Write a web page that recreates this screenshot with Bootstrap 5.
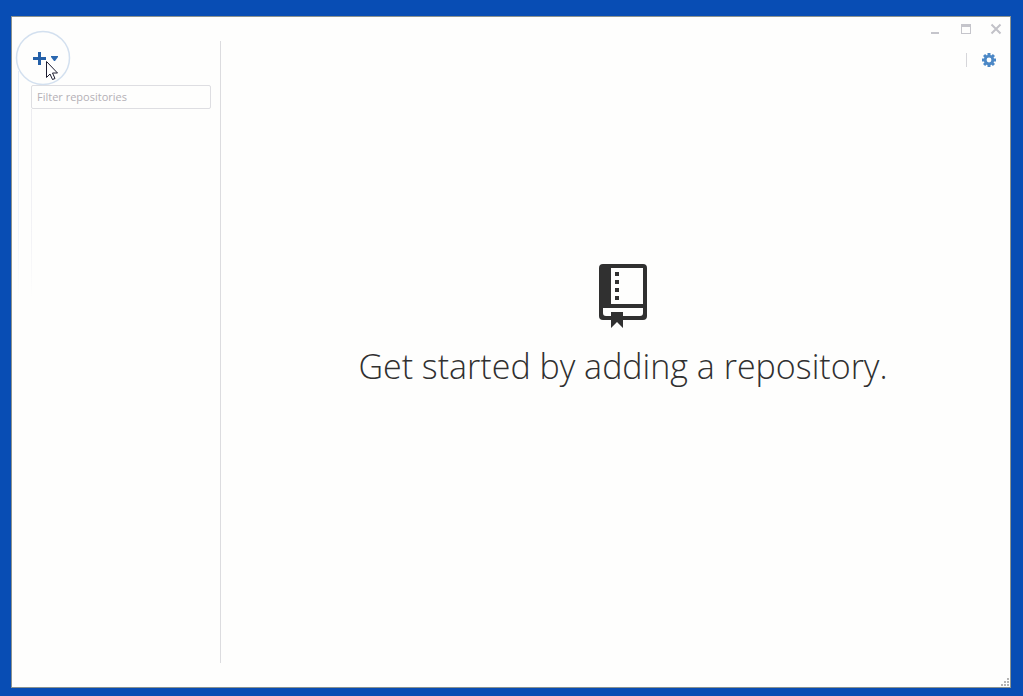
<!DOCTYPE html>
<html lang="en">
<head>
<meta charset="utf-8">
<meta name="viewport" content="width=device-width, initial-scale=1">
<title>Repositories</title>
<link href="https://cdn.jsdelivr.net/npm/bootstrap@5.3.0/dist/css/bootstrap.min.css" rel="stylesheet">
<style>
  body { background: #084db4; font-family: "Open Sans", "Noto Sans", sans-serif; padding: 16px 12px 8px 11px; }
  .app-window { background: #fefefd; border: 1px solid #8c938f; }
  .sidebar { width: 209px; margin: 24px 0; padding: 0 9px 0 19px; border-right: 1px solid #dcdcdf; }
  .add-area { height: 44px; padding: 9px 0 0 1px; }
  .add-btn { gap: 4px; height: 16px; line-height: 1; }
  .ring { position: absolute; left: -16px; top: -11px; pointer-events: none; }
  .pointer { position: absolute; left: 15px; top: 19px; pointer-events: none; }
  .trail { position: absolute; top: 54px; height: 230px; width: 1px; pointer-events: none; }
  .trail-outer { left: 6px; background: linear-gradient(#e3ecf7, #f0f4fa 70%, #fefefd); }
  .trail-inner { left: 19px; top: 92px; height: 190px; background: linear-gradient(#ececf0, #f3f3f6 70%, #fefefd); }
  .filter-box { height: 24px; padding: 0 5px 1px; font-size: 11px; border: 1px solid #dedee2; border-radius: 2px; background: transparent; color: #555; }
  .filter-box::placeholder { color: #b4b0b6; opacity: 1; }
  .title-bar { height: 24px; padding: 5px 8px 0 0; gap: 18px; }
  .tool-bar { height: 38px; padding: 0 13px 0 0; gap: 14px; }
  .tool-sep { width: 1px; height: 14px; background: #d6d6da; }
  .blank-slate { padding: 0 0 114px 15px; }
  .blank-slate h1 { font-size: 34px; font-weight: 300; line-height: 44px; margin: 16px 0 0; color: #303030; }
  .size-grip { position: absolute; right: 0; bottom: 0; }
  svg { display: block; }
</style>
</head>
<body class="vh-100 d-flex overflow-hidden">
<div class="app-window d-flex flex-grow-1 position-relative">
  <div class="trail trail-outer"></div>
  <div class="trail trail-inner"></div>
  <aside class="sidebar flex-shrink-0">
    <div class="add-area position-relative">
      <svg class="ring" width="56" height="56" viewBox="0 0 56 56" aria-hidden="true"><circle cx="28" cy="28" r="26.5" fill="#fefefd" stroke="#d3e0ef" stroke-width="1.5"/></svg>
      <button type="button" class="add-btn btn p-0 border-0 rounded-0 d-flex align-items-center position-relative" aria-label="Add a repository">
        <svg width="15" height="13" viewBox="0 0 15 13"><path d="M6 0h3v5h5v3H9v5H6V8H1V5h5z" fill="#2460a8"/></svg>
        <svg width="7" height="5" viewBox="0 0 7 5"><path d="M0 0h7v1L4 5H3L0 1z" fill="#2b68b0"/></svg>
      </button>
      <svg class="pointer" width="14" height="21" viewBox="0 0 14 21" aria-hidden="true"><path d="M.5 1.500v16l3.500-3.500L6.500 19.500l2.500-1-2.500-5.500h5z" fill="#fff" stroke="#1c1c30"/></svg>
    </div>
    <input type="text" class="filter-box form-control" placeholder="Filter repositories" aria-label="Filter repositories">
  </aside>
  <main class="flex-grow-1 d-flex flex-column">
    <div class="title-bar d-flex justify-content-end align-items-start">
      <button type="button" class="btn p-0 border-0" aria-label="Minimize"><svg width="12" height="14" viewBox="0 0 12 14"><path d="M1 10h8v2H1z" fill="#c5c5cb"/></svg></button>
      <button type="button" class="btn p-0 border-0" aria-label="Maximize"><svg width="12" height="14" viewBox="0 0 12 14"><path d="M1 2h10v10H1zM2 5v6h8V5z" fill="#c5c5cb" fill-rule="evenodd"/></svg></button>
      <button type="button" class="btn p-0 border-0" aria-label="Close"><svg width="12" height="14" viewBox="0 0 12 14"><path d="M1.500 2.500l9 9m0-9l-9 9" stroke="#c2c2c8" stroke-width="2"/></svg></button>
    </div>
    <div class="tool-bar d-flex justify-content-end align-items-center">
      <span class="tool-sep"></span>
      <button type="button" class="btn p-0 border-0" aria-label="Settings"><svg width="16" height="14" viewBox="-8 -7 16 14"><g fill="#4c88c6"><path id="tooth" d="M-1.500-7h3v14h-3z"/><use href="#tooth" transform="rotate(45)"/><use href="#tooth" transform="rotate(90)"/><use href="#tooth" transform="rotate(135)"/><circle r="5.200"/></g><circle r="2.400" fill="#fefefd"/></svg></button>
    </div>
    <div class="blank-slate flex-grow-1 d-flex flex-column align-items-center justify-content-center">
      <svg width="48" height="64" viewBox="0 0 48 64" aria-hidden="true"><path fill="#303030" fill-rule="evenodd" d="M4 0h40q4 0 4 4v48q0 4-4 4H24v8l-6-6-6 6v-8H4q-4 0-4-4V4q0-4 4-4zM12 4v36h32V4zM4 44v5q0 3 3 3h5v-4h12v4h17q3 0 3-3v-5zM16 8h4v4h-4zM16 16h4v4h-4zM16 24h4v4h-4zM16 32h4v4h-4z"/></svg>
      <h1 class="text-nowrap">Get started by adding a repository.</h1>
    </div>
  </main>
  <svg class="size-grip" width="10" height="9" viewBox="0 0 10 9" aria-hidden="true"><path d="M7 0h2v2H7zM4 3h2v2H4zM7 3h2v2H7zM1 6h2v2H1zM4 6h2v2H4zM7 6h2v2H7z" fill="#b4b4b4"/></svg>
</div>
<script src="https://cdn.jsdelivr.net/npm/bootstrap@5.3.0/dist/js/bootstrap.bundle.min.js"></script>
</body>
</html>
